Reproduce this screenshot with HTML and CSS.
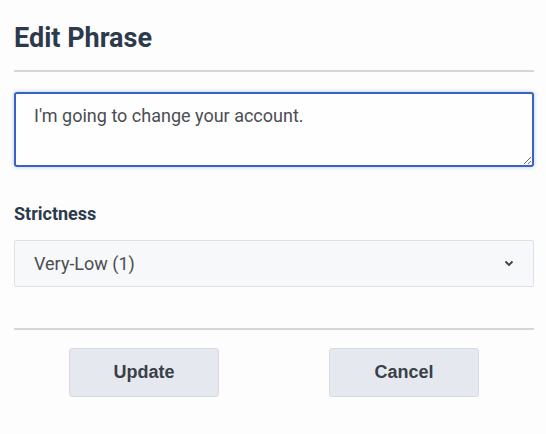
FILE: index.html
```html
<!DOCTYPE html>
<html>
<head>
<meta charset="utf-8">
<link rel="stylesheet" href="styles.css">
</head>
<body>
<div class="dialog">
  <h1 class="title">Edit Phrase</h1>
  <hr class="divider">
  <textarea class="phrase">I'm going to change your account.</textarea>
  <label class="label">Strictness</label>
  <div class="select">
    <span class="select-value">Very-Low (1)</span>
    <svg class="chevron" width="10" height="7" viewBox="0 0 10 7"><path d="M1.5 1.5 L5 5 L8.5 1.5" fill="none" stroke="#3a3f48" stroke-width="1.8"/></svg>
  </div>
  <hr class="divider bottom">
  <div class="actions">
    <div class="slot"><button class="btn">Update</button></div>
    <div class="slot"><button class="btn">Cancel</button></div>
  </div>
</div>
</body>
</html>
```

FILE: styles.css
```css
html, body {
  margin: 0;
  padding: 0;
  background: #fdfdfd;
}
body {
  font-family: Roboto, "Liberation Sans", sans-serif;
}
.dialog {
  width: 520px;
  margin-left: 14px;
  display: flex;
  flex-direction: column;
}
.title {
  margin: 0;
  padding-top: 22px;
  font-size: 27px;
  line-height: 32px;
  font-weight: 700;
  color: #2c3a4b;
}
.divider {
  margin: 0;
  border: 0;
  height: 2px;
  background: #d6d6d6;
}
.title + .divider {
  margin-top: 16px;
}
.phrase {
  margin-top: 20px;
  box-sizing: border-box;
  width: 520px;
  height: 75px;
  border: 2px solid #3a62c3;
  border-radius: 3px;
  box-shadow: 0 0 4px rgba(58, 98, 195, 0.35);
  background: #fefefe;
  padding: 11px 18px;
  font-family: Roboto, sans-serif;
  font-size: 18px;
  line-height: 22px;
  color: #4b4d52;
  outline: none;
}
.label {
  margin-top: 36px;
  font-size: 18px;
  line-height: 22px;
  font-weight: 700;
  color: #2c3a4b;
}
.select {
  margin-top: 15px;
  box-sizing: border-box;
  height: 47px;
  border: 1px solid #dde1e7;
  border-radius: 2px;
  background: #f7f8fa;
  display: flex;
  align-items: center;
  justify-content: space-between;
  padding: 0 19px 0 19px;
}
.select-value {
  font-size: 18px;
  color: #4b4d52;
}
.chevron {
  display: block;
}
.divider.bottom {
  margin-top: 41px;
}
.actions {
  margin-top: 18px;
  display: grid;
  grid-template-columns: 1fr 1fr;
}
.slot {
  display: flex;
  justify-content: center;
}
.btn {
  width: 150px;
  height: 49px;
  border: 1px solid #d7dbe1;
  border-radius: 3px;
  background: #e5e8ef;
  font-family: "Liberation Sans", Arial, sans-serif;
  font-weight: 700;
  font-size: 18px;
  color: #3b3f48;
  padding: 0;
}
```
